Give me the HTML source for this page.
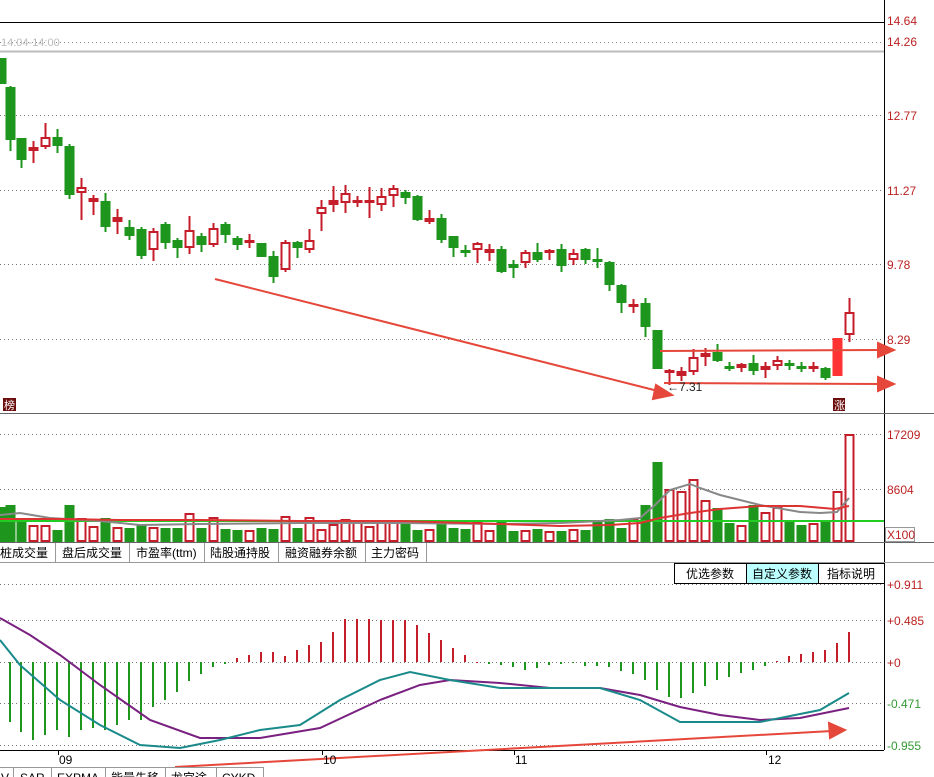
<!DOCTYPE html>
<html><head><meta charset="utf-8"><style>
html,body{margin:0;padding:0;background:#fff;width:934px;height:777px;overflow:hidden}
svg{display:block}
text{font-family:"Liberation Sans","Noto Sans CJK SC",sans-serif}
</style></head><body>
<svg id="s" width="934" height="777" xmlns="http://www.w3.org/2000/svg">
<rect width="934" height="777" fill="#fff"/>
<line x1="0" y1="22.5" x2="884" y2="22.5" stroke="#000"/>
<line x1="0" y1="42.5" x2="884" y2="42.5" stroke="#888" stroke-dasharray="1,3"/>
<line x1="0" y1="51.5" x2="884" y2="51.5" stroke="#bbb" stroke-width="2"/>
<text x="1" y="46" font-size="11" fill="#bbb">14:04-14:00</text>
<g stroke="#777" stroke-dasharray="1,3">
<line x1="0" y1="115.5" x2="884" y2="115.5"/><line x1="0" y1="190.5" x2="884" y2="190.5"/><line x1="0" y1="264.5" x2="884" y2="264.5"/><line x1="0" y1="339.5" x2="884" y2="339.5"/>
<line x1="0" y1="434.5" x2="884" y2="434.5"/><line x1="0" y1="489.5" x2="884" y2="489.5"/>
<line x1="0" y1="584.5" x2="884" y2="584.5"/><line x1="0" y1="620.5" x2="884" y2="620.5"/><line x1="0" y1="662.5" x2="884" y2="662.5"/><line x1="0" y1="703.5" x2="884" y2="703.5"/><line x1="0" y1="745.5" x2="884" y2="745.5"/>
</g>
<line x1="884.5" y1="0" x2="884.5" y2="750" stroke="#000"/>
<line x1="0" y1="413.5" x2="934" y2="413.5" stroke="#666"/>
<line x1="0" y1="542.5" x2="934" y2="542.5" stroke="#666"/>
<line x1="0" y1="562.5" x2="934" y2="562.5" stroke="#999"/>
<line x1="0" y1="750.5" x2="884" y2="750.5" stroke="#000"/>
<g font-size="12" fill="#b22">
<text x="887" y="25">14.64</text><text x="887" y="46">14.26</text><text x="887" y="120">12.77</text><text x="887" y="195">11.27</text><text x="887" y="269">9.78</text><text x="887" y="344">8.29</text>
<text x="887" y="439">17209</text><text x="887" y="494">8604</text>
<text x="887" y="589">+0.911</text><text x="887" y="625">+0.485</text><text x="887" y="667">+0</text>
</g>
<g font-size="12" fill="#393"><text x="887" y="708">-0.471</text><text x="887" y="750">-0.955</text></g>
<rect x="885.5" y="527.5" width="29" height="14" fill="#fff" stroke="#999"/>
<text x="887" y="539" font-size="12" fill="#b22">X100</text>
<g id="cand"></g><g id="vol"></g><g id="macd"></g>
<polyline fill="none" stroke="#2c2" stroke-width="2" points="0,521 884,521 "/>
<polyline fill="none" stroke="#888" stroke-width="2" points="0,515 20,513 50,518 100,521 140,525 200,524 300,523 400,523 500,524 560,523 620,520 640,518 655,505 670,490 690,484 700,488 720,495 760,505 800,512 820,513 837,512 849,498"/>
<polyline fill="none" stroke="#d33" stroke-width="2" points="0,519 60,519 120,520 200,520 300,521 400,521 500,524 560,526 610,525 640,523 660,518 690,513 720,509 760,506 800,506 835,509 849,506"/>
<g stroke="#e5483a" stroke-width="2" fill="#e5483a">
<line x1="215" y1="279" x2="662" y2="392"/><polygon points="672,395 656,385 653,399"/>
<line x1="660" y1="351" x2="880" y2="350"/><polygon points="894,350 878,343 878,357"/>
<line x1="664" y1="383" x2="880" y2="384"/><polygon points="894,384 878,377 878,391"/>
<line x1="175" y1="767" x2="832" y2="731"/><polygon points="845,730 829,723 830,738"/>
</g>
<text x="667" y="391" font-size="12" fill="#222">←7.31</text>
<rect x="833" y="398" width="12" height="13" fill="#6b0d0d"/><text x="834" y="409" font-size="11" fill="#fff">涨</text>
<rect x="3" y="398" width="13" height="13" fill="#6b0d0d"/><text x="4" y="409" font-size="11" fill="#fff">榜</text>
<polyline fill="none" stroke="#7a2080" stroke-width="2" points="0,618 30,635 60,655 100,685 150,720 200,738 260,738 320,728 380,700 420,685 450,680 500,683 550,688 600,688 640,695 680,707 720,715 760,720 800,718 849,708"/>
<polyline fill="none" stroke="#1a8a8a" stroke-width="2" points="0,640 20,665 60,700 100,725 140,745 180,748 220,740 260,730 300,725 340,700 380,680 410,672 450,680 500,688 600,688 640,700 680,722 760,722 820,710 849,693"/>
<g font-size="12" fill="#000">
<text x="0" y="557">桩成交量</text><text x="62" y="557">盘后成交量</text><text x="136" y="557">市盈率(ttm)</text><text x="210" y="557">陆股通持股</text><text x="285" y="557">融资融券余额</text><text x="371" y="557">主力密码</text>
</g>
<g stroke="#999"><line x1="55.5" y1="543" x2="55.5" y2="562"/><line x1="129.5" y1="543" x2="129.5" y2="562"/><line x1="204.5" y1="543" x2="204.5" y2="562"/><line x1="278.5" y1="543" x2="278.5" y2="562"/><line x1="365.5" y1="543" x2="365.5" y2="562"/><line x1="426.5" y1="543" x2="426.5" y2="562"/></g>
<rect x="674.5" y="563.5" width="72" height="20" fill="#fff" stroke="#000"/>
<rect x="746.5" y="563.5" width="72" height="20" fill="#bff" stroke="#000"/>
<rect x="818.5" y="563.5" width="66" height="20" fill="#fff" stroke="#000"/>
<g font-size="12" fill="#000"><text x="686" y="578">优选参数</text><text x="752" y="578">自定义参数</text><text x="827" y="578">指标说明</text></g>
<g font-size="12" fill="#000"><text x="59" y="764">09</text><text x="323" y="764">10</text><text x="515" y="764">11</text><text x="768" y="764">12</text></g>
<g stroke="#000"><line x1="58.5" y1="751" x2="58.5" y2="755"/><line x1="322.5" y1="751" x2="322.5" y2="755"/><line x1="514.5" y1="751" x2="514.5" y2="755"/><line x1="766.5" y1="751" x2="766.5" y2="755"/></g>
<line x1="0" y1="767.5" x2="264" y2="767.5" stroke="#999"/>
<g stroke="#999"><line x1="13.5" y1="767" x2="13.5" y2="777"/><line x1="51.5" y1="767" x2="51.5" y2="777"/><line x1="105.5" y1="767" x2="105.5" y2="777"/><line x1="165.5" y1="767" x2="165.5" y2="777"/><line x1="216.5" y1="767" x2="216.5" y2="777"/><line x1="263.5" y1="767" x2="263.5" y2="777"/></g>
<g font-size="12" fill="#000"><text x="1" y="782">V</text><text x="20" y="782">SAR</text><text x="57" y="782">EXPMA</text><text x="111" y="782">能量先移</text><text x="171" y="782">龙宫途</text><text x="222" y="782">CYKD</text></g>
</svg>
<script>
var G="#1e961e",R="#c41e2a",NS="http://www.w3.org/2000/svg";
function el(p,t,a){var e=document.createElementNS(NS,t);for(var k in a)e.setAttribute(k,a[k]);document.getElementById(p).appendChild(e);}
var C=[[1,58,84,58,84,'g'],[10,87,140,86,151,'g'],[21,138,160,138,168,'g'],[33,147,151,141,163,'R'],[45,137,147,123,149,'r'],[57,137,146,129,153,'g'],[69,146,195,144,199,'g'],[81,187,193,178,220,'r'],[93,198,202,195,215,'R'],[105,201,227,193,232,'g'],[117,217,222,209,234,'R'],[129,227,236,220,240,'g'],[141,229,256,227,259,'g'],[153,231,250,228,261,'r'],[165,224,243,222,249,'g'],[177,240,248,238,258,'g'],[189,230,248,216,254,'r'],[201,236,245,233,252,'g'],[213,228,245,223,247,'r'],[225,224,235,222,243,'g'],[237,238,245,236,250,'g'],[249,240,243,234,248,'R'],[261,243,257,243,257,'g'],[273,256,277,251,283,'g'],[285,242,270,240,272,'r'],[297,242,248,241,258,'g'],[309,240,250,229,253,'r'],[321,207,214,200,231,'r'],[333,200,205,186,212,'R'],[345,193,203,185,213,'r'],[357,200,203,196,207,'R'],[369,200,203,187,218,'R'],[381,196,205,188,211,'r'],[393,188,196,185,207,'r'],[405,192,198,190,204,'g'],[417,196,220,195,221,'g'],[429,218,222,210,224,'R'],[441,218,240,214,243,'g'],[453,236,248,236,257,'g'],[465,250,253,245,257,'g'],[477,243,250,242,263,'r'],[489,249,253,244,261,'R'],[501,249,272,246,273,'g'],[513,264,268,260,278,'g'],[525,252,263,250,268,'r'],[537,252,260,243,262,'g'],[549,250,253,249,260,'R'],[561,249,266,244,272,'g'],[573,253,260,249,265,'r'],[585,249,260,248,264,'g'],[597,259,261,248,268,'g'],[609,262,285,261,291,'g'],[621,285,303,284,313,'g'],[633,304,307,299,313,'R'],[645,303,327,298,337,'g'],[657,330,369,330,369,'g'],[669,370,373,369,385,'R'],[681,371,376,367,381,'R'],[693,357,372,349,375,'r'],[705,353,357,348,366,'R'],[717,352,361,344,362,'g'],[729,366,368,362,371,'g'],[741,364,368,363,372,'R'],[753,363,371,355,375,'g'],[765,366,370,362,378,'R'],[777,360,366,356,370,'r'],[789,363,365,360,370,'g'],[801,366,368,362,372,'g'],[813,366,368,362,372,'R'],[825,368,378,367,380,'g'],[837,338,376,338,376,'F'],[849,312,335,298,342,'r']];
C.forEach(function(c){var x=c[0],col=c[5]=='g'?G:(c[5]=='F'?"#f33":R);
el('cand','rect',{x:x-0.5,y:c[3],width:2,height:c[4]-c[3],fill:col});
if(c[5]=='r')el('cand','rect',{x:x-3.5,y:c[1]+1,width:8,height:Math.max(c[2]-c[1]-2,2),fill:"#fff",stroke:col,"stroke-width":2});
else el('cand','rect',{x:x-4.5,y:c[1],width:10,height:Math.max(c[2]-c[1],3),fill:col});});
var V=[507,505,522,525,525,530,505,518,526,518,527,528,525,527,528,528,513,528,517,529,530,530,528,529,516,528,517,529,524,519,521,526,520,521,523,530,529,520,528,529,521,530,521,531,530,529,531,531,529,530,522,519,528,519,505,462,489,491,479,500,508,523,525,505,512,507,520,525,523,520,491,434];
C.forEach(function(c,i){var x=c[0],t=V[i]||530,g=c[5]=='g',col=g?G:R;
if(g)el('vol','rect',{x:x-4.5,y:t,width:10,height:542-t,fill:col});
else el('vol','rect',{x:x-3.5,y:t+1,width:8,height:542-t-2,fill:"#fff",stroke:col,"stroke-width":2});});
var M=[0,722,732,740,735,730,737,730,728,730,725,720,720,707,700,692,681,674,667,664,658,655,652,652,656,650,645,642,632,619,619,619,620,620,620,625,633,640,648,655,662,664,665,667,670,668,665,664,663,666,666,667,671,674,680,690,697,698,693,686,680,677,673,670,666,661,656,654,652,650,643,632];
C.forEach(function(c,i){if(!i||M[i]===undefined)return;var v=M[i];el('macd','rect',{x:c[0]-1,y:Math.min(v,662),width:2,height:Math.abs(v-662)||1,fill:v>662?G:R});});
</script>
</body></html>
